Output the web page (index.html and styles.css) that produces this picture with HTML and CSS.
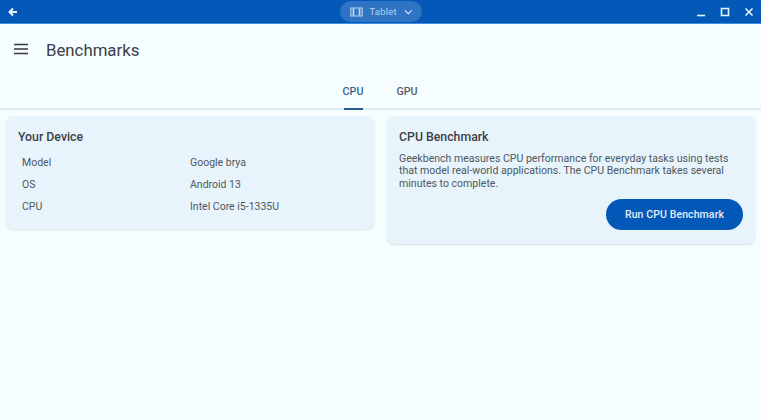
FILE: index.html
```html
<!DOCTYPE html>
<html lang="en">
<head>
<meta charset="utf-8">
<title>Benchmarks</title>
<link rel="stylesheet" href="styles.css">
</head>
<body>
<header class="caption">
  <svg class="back" width="12" height="12" viewBox="0 0 12 12"><path d="M10 6H3M6 2.500 2.500 6 6 9.500" fill="none" stroke="#e8f2fb" stroke-width="2"/></svg>
  <div class="mode">
    <svg width="15" height="12" viewBox="0 0 15 12"><path d="M1 1.500h13v9H1z" fill="none" stroke="#c4d8ef" stroke-width="1.200"/><path d="M3 2h2v8H3zM10 2h2v8h-2z" fill="#c4d8ef"/></svg>
    <span>Tablet</span>
    <svg width="10" height="6" viewBox="0 0 10 6"><path d="M1 1l4 4 4-4" fill="none" stroke="#d5e4f5" stroke-width="1.200"/></svg>
  </div>
  <div class="win">
    <svg width="10" height="10" viewBox="0 0 10 10"><path d="M1 8.500h8" stroke="#e8f2fb" stroke-width="1.600"/></svg>
    <svg width="10" height="10" viewBox="0 0 10 10"><path d="M1.500 1.500h7v7h-7z" fill="none" stroke="#e8f2fb" stroke-width="1.600"/></svg>
    <svg width="10" height="10" viewBox="0 0 10 10"><path d="M1.500 1.500l7 7M8.500 1.500l-7 7" stroke="#e8f2fb" stroke-width="1.600"/></svg>
  </div>
</header>
<div class="appbar">
  <svg class="menu" width="16" height="12" viewBox="0 0 16 12"><path d="M1 1.500h14M1 6h14M1 10.500h14" stroke="#33393f" stroke-width="1.500"/></svg>
  <h1>Benchmarks</h1>
</div>
<nav class="tabs">
  <div class="tab active">CPU</div>
  <div class="tab">GPU</div>
</nav>
<main class="content">
  <section class="card device">
    <h2>Your Device</h2>
    <dl>
      <dt>Model</dt><dd>Google brya</dd>
      <dt>OS</dt><dd>Android 13</dd>
      <dt>CPU</dt><dd>Intel Core i5-1335U</dd>
    </dl>
  </section>
  <section class="card bench">
    <h2>CPU Benchmark</h2>
    <p>Geekbench measures CPU performance for everyday tasks using tests that model real-world applications. The CPU Benchmark takes several minutes to complete.</p>
    <div class="actions"><button>Run CPU Benchmark</button></div>
  </section>
</main>
</body>
</html>
```
FILE: styles.css
```css
* { box-sizing: border-box; }
html, body { margin: 0; height: 100%; }
body {
  background: #f5fdff;
  font-family: Roboto, "Liberation Sans", sans-serif;
  color: #50575d;
  overflow: hidden;
}
.caption {
  height: 24px;
  background: #0458b8;
  border-bottom: 1px solid #3f8fe0;
  display: grid;
  grid-template-columns: 1fr auto 1fr;
  align-items: center;
  padding: 0 7px;
}
.back { justify-self: start; }
.mode {
  height: 21px;
  width: 82px;
  border-radius: 11px;
  background: #2f74c4;
  color: #b9d0ea;
  font-size: 9.500px;
  display: flex;
  align-items: center;
  gap: 7px;
  padding: 0 9px 0 10px;
  letter-spacing: 0.2px;
}
.win {
  justify-self: end;
  display: flex;
  gap: 14px;
}
.appbar {
  height: 50px;
  display: flex;
  align-items: center;
  gap: 17px;
  padding: 1px 0 0 13px;
}
.menu { margin-top: -2px; }
.appbar h1 {
  margin: 0;
  font-size: 16.800px;
  font-weight: 400;
  color: #3a4045;
}
.tabs {
  height: 36px;
  border-bottom: 2px solid #dde9ec;
  display: flex;
  justify-content: center;
  gap: 32px;
  padding-right: 1px;
}
.tab {
  width: 22px;
  font-size: 10.700px;
  font-weight: 500;
  display: flex;
  justify-content: center;
  padding-top: 11px;
  position: relative;
  color: #545b61;
}
.tab.active { color: #33658f; }
.tab.active::after {
  content: "";
  position: absolute;
  left: 2px;
  right: 1px;
  bottom: -2px;
  height: 2px;
  background: #2a5c96;
}
.content {
  display: grid;
  grid-template-columns: 368px 368px;
  align-items: start;
  padding: 6px 6px 0;
  gap: 13px;
}
.card {
  background: #e7f4fc;
  border-radius: 7px;
  box-shadow: 0 1px 2px rgba(60, 90, 110, 0.16);
  padding: 14px 12px 0;
}
.card h2 {
  margin: 0;
  font-size: 12.300px;
  font-weight: 500;
  line-height: 14px;
  color: #3b4147;
}
.device { height: 113px; }
.device dl {
  margin: 12px 0 0 4px;
  display: grid;
  grid-template-columns: 168px 1fr;
  row-gap: 8px;
  font-size: 10.500px;
  line-height: 14px;
}
.device dt, .device dd { margin: 0; }
.bench { height: 128px; }
.bench p {
  margin: 9px 0 0;
  font-size: 10.560px;
  line-height: 12.300px;
  width: 344px;
}
.actions {
  display: flex;
  justify-content: flex-end;
  margin-top: 9px;
}
.actions button {
  width: 137px;
  height: 31px;
  border: 0;
  border-radius: 16px;
  background: #0458b8;
  color: #e4eefa;
  font: 500 10.500px Roboto, "Liberation Sans", sans-serif;
  letter-spacing: 0.1px;
}
```
